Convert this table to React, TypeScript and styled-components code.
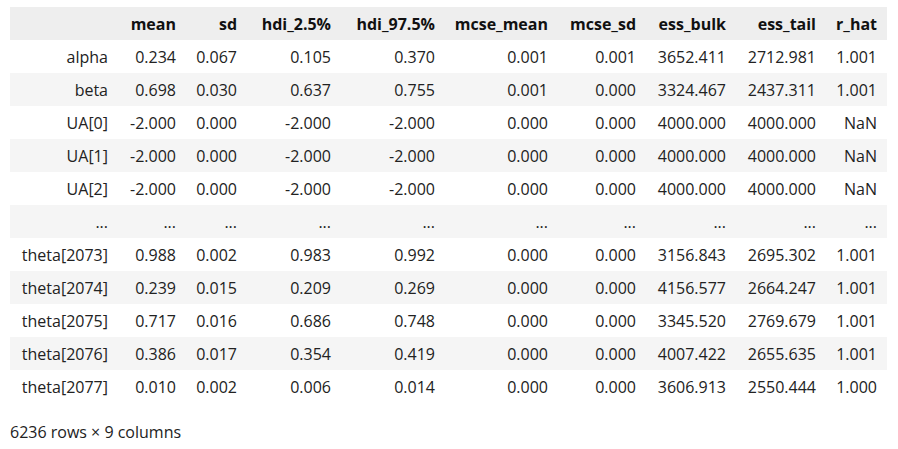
import styled, { createGlobalStyle } from "styled-components";

type Row = { name: string; values: string[] };

const columns = [
  "mean",
  "sd",
  "hdi_2.5%",
  "hdi_97.5%",
  "mcse_mean",
  "mcse_sd",
  "ess_bulk",
  "ess_tail",
  "r_hat",
];

// widths measured off the screenshot, index column first
const widths = [108, 68, 61, 94, 104, 113, 88, 90, 90, 61];

const rows: Row[] = [
  { name: "alpha", values: ["0.234", "0.067", "0.105", "0.370", "0.001", "0.001", "3652.411", "2712.981", "1.001"] },
  { name: "beta", values: ["0.698", "0.030", "0.637", "0.755", "0.001", "0.000", "3324.467", "2437.311", "1.001"] },
  { name: "UA[0]", values: ["-2.000", "0.000", "-2.000", "-2.000", "0.000", "0.000", "4000.000", "4000.000", "NaN"] },
  { name: "UA[1]", values: ["-2.000", "0.000", "-2.000", "-2.000", "0.000", "0.000", "4000.000", "4000.000", "NaN"] },
  { name: "UA[2]", values: ["-2.000", "0.000", "-2.000", "-2.000", "0.000", "0.000", "4000.000", "4000.000", "NaN"] },
  { name: "...", values: ["...", "...", "...", "...", "...", "...", "...", "...", "..."] },
  { name: "theta[2073]", values: ["0.988", "0.002", "0.983", "0.992", "0.000", "0.000", "3156.843", "2695.302", "1.001"] },
  { name: "theta[2074]", values: ["0.239", "0.015", "0.209", "0.269", "0.000", "0.000", "4156.577", "2664.247", "1.001"] },
  { name: "theta[2075]", values: ["0.717", "0.016", "0.686", "0.748", "0.000", "0.000", "3345.520", "2769.679", "1.001"] },
  { name: "theta[2076]", values: ["0.386", "0.017", "0.354", "0.419", "0.000", "0.000", "4007.422", "2655.635", "1.001"] },
  { name: "theta[2077]", values: ["0.010", "0.002", "0.006", "0.014", "0.000", "0.000", "3606.913", "2550.444", "1.000"] },
];

const GlobalStyle = createGlobalStyle`
  html, body {
    margin: 0;
    background: #ffffff;
  }
  body {
    font-family: "Open Sans", "Noto Sans", "Liberation Sans", sans-serif;
    color: #222222;
  }
`;

const Output = styled.div`
  padding: 7px 10px 0 10px;
`;

const Frame = styled.table`
  border-collapse: collapse;
  border-spacing: 0;
  table-layout: fixed;
  font-size: 16px;
`;

const HeadRow = styled.tr`
  background: #eeeeee;
`;

const BodyRow = styled.tr<{ $striped: boolean }>`
  background: ${(p) => (p.$striped ? "#f5f5f5" : "#ffffff")};
`;

const HeadCell = styled.th`
  height: 33px;
  padding: 0 10px 0 0;
  text-align: right;
  font-weight: 700;
  color: #111111;
  white-space: nowrap;
  box-sizing: border-box;
`;

const Cell = styled.td`
  height: 33px;
  padding: 0 10px 0 0;
  text-align: right;
  font-weight: 400;
  white-space: nowrap;
  box-sizing: border-box;
`;

const Summary = styled.p`
  margin: 19px 0 0 0;
  font-size: 16px;
  line-height: 20px;
`;

export default function App() {
  return (
    <>
      <GlobalStyle />
      <Output>
        <Frame>
          <colgroup>
            {widths.map((w, i) => (
              <col key={i} style={{ width: w }} />
            ))}
          </colgroup>
          <thead>
            <HeadRow>
              <HeadCell />
              {columns.map((c) => (
                <HeadCell key={c}>{c}</HeadCell>
              ))}
            </HeadRow>
          </thead>
          <tbody>
            {rows.map((r, i) => (
              <BodyRow key={r.name + i} $striped={i % 2 === 1}>
                <Cell>{r.name}</Cell>
                {r.values.map((v, j) => (
                  <Cell key={j}>{v}</Cell>
                ))}
              </BodyRow>
            ))}
          </tbody>
        </Frame>
        <Summary>6236 rows × 9 columns</Summary>
      </Output>
    </>
  );
}
